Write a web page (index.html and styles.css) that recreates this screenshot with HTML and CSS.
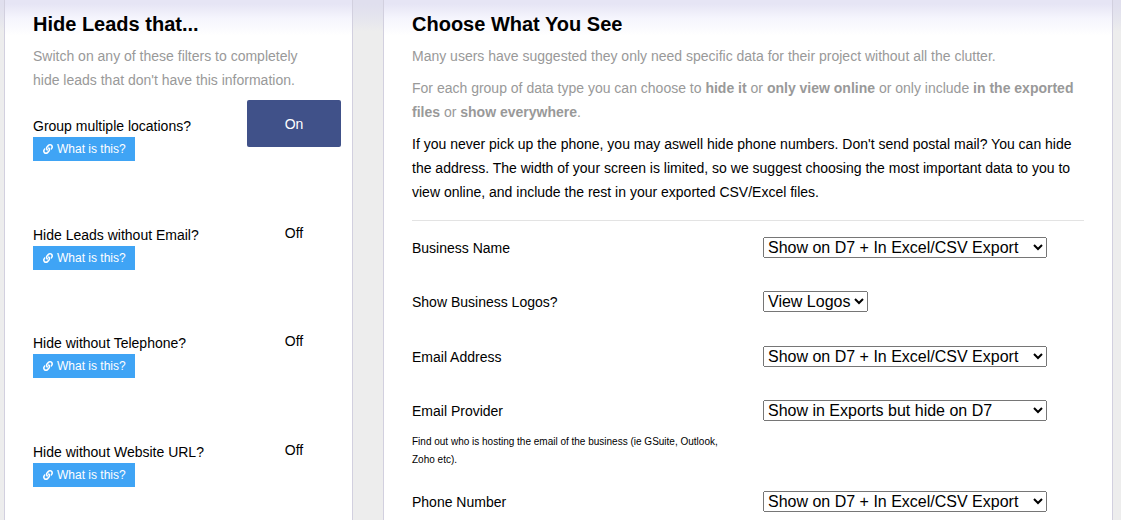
FILE: index.html
```
<!DOCTYPE html>
<html lang="en">
  <head>
    <meta charset="UTF-8" />
    <meta name="viewport" content="width=device-width, initial-scale=1.0" />
    <title>Lead Settings</title>
    <link rel="stylesheet" href="styles.css">
  </head>
  <body>
    <svg class="sprite" aria-hidden="true">
      <symbol id="icon-link" viewBox="0 0 512 512">
        <path fill="currentColor" d="M326.612 185.391c59.747 59.809 58.927 155.698.36 214.59-.11.12-.24.25-.36.37l-67.2 67.2c-59.27 59.27-155.699 59.262-214.96 0-59.27-59.26-59.27-155.7 0-214.96l37.106-37.106c9.84-9.84 26.786-3.3 27.294 10.606.648 17.722 3.826 35.527 9.69 52.721 1.986 5.822.567 12.262-3.783 16.612l-13.087 13.087c-28.026 28.026-28.905 73.66-1.155 101.96 28.024 28.579 74.086 28.749 102.325.51l67.2-67.19c28.191-28.191 28.073-73.757 0-101.83-3.701-3.694-7.429-6.564-10.341-8.569a16.037 16.037 0 0 1-6.947-12.606c-.396-10.567 3.348-21.456 11.698-29.806l21.054-21.055c5.521-5.521 14.182-6.199 20.584-1.731a152.482 152.482 0 0 1 20.522 17.197zM467.547 44.449c-59.261-59.262-155.69-59.27-214.96 0l-67.2 67.2c-.12.12-.25.25-.36.37-58.566 58.892-59.387 154.781.36 214.59a152.454 152.454 0 0 0 20.521 17.196c6.402 4.468 15.064 3.789 20.584-1.731l21.054-21.055c8.35-8.35 12.094-19.239 11.698-29.806a16.037 16.037 0 0 0-6.947-12.606c-2.912-2.005-6.64-4.875-10.341-8.569-28.073-28.073-28.191-73.639 0-101.83l67.2-67.19c28.239-28.239 74.3-28.069 102.325.51 27.75 28.3 26.872 73.934-1.155 101.96l-13.087 13.087c-4.35 4.35-5.769 10.79-3.783 16.612 5.864 17.194 9.042 34.999 9.69 52.721.509 13.906 17.454 20.446 27.294 10.606l37.106-37.106c59.271-59.259 59.271-155.699.001-214.959z"/>
      </symbol>
    </svg>

    <main class="settings">
      <section class="panel">
        <h2>Hide Leads that...</h2>
        <p class="muted">Switch on any of these filters to completely hide leads that don't have this information.</p>

        <div class="filters">
          <div class="filter">
            <div class="filter-text">
              <span id="filter-group">Group multiple locations?</span>
              <a class="help" href="#"><svg><use href="#icon-link" /></svg>What is this?</a>
            </div>
            <button class="toggle on" type="button" aria-pressed="true" aria-labelledby="filter-group">On</button>
          </div>
          <div class="filter">
            <div class="filter-text">
              <span id="filter-email">Hide Leads without Email?</span>
              <a class="help" href="#"><svg><use href="#icon-link" /></svg>What is this?</a>
            </div>
            <button class="toggle" type="button" aria-pressed="false" aria-labelledby="filter-email">Off</button>
          </div>
          <div class="filter">
            <div class="filter-text">
              <span id="filter-phone">Hide without Telephone?</span>
              <a class="help" href="#"><svg><use href="#icon-link" /></svg>What is this?</a>
            </div>
            <button class="toggle" type="button" aria-pressed="false" aria-labelledby="filter-phone">Off</button>
          </div>
          <div class="filter">
            <div class="filter-text">
              <span id="filter-url">Hide without Website URL?</span>
              <a class="help" href="#"><svg><use href="#icon-link" /></svg>What is this?</a>
            </div>
            <button class="toggle" type="button" aria-pressed="false" aria-labelledby="filter-url">Off</button>
          </div>
        </div>
      </section>

      <section class="panel">
        <h2>Choose What You See</h2>
        <p class="muted">Many users have suggested they only need specific data for their project without all the clutter.</p>
        <p class="muted">For each group of data type you can choose to <b>hide it</b> or <b>only view online</b> or only include <b>in the exported files</b> or <b>show everywhere</b>.</p>
        <p>If you never pick up the phone, you may aswell hide phone numbers. Don't send postal mail? You can hide the address. The width of your screen is limited, so we suggest choosing the most important data to you to view online, and include the rest in your exported CSV/Excel files.</p>
        <hr>

        <div class="fields">
          <div class="field">
            <label for="name">Business Name</label>
            <select id="name" class="wide">
              <option>Show on D7 + In Excel/CSV Export</option>
              <option>Show in Exports but hide on D7</option>
            </select>
          </div>
          <div class="field">
            <label for="logos">Show Business Logos?</label>
            <select id="logos">
              <option>View Logos</option>
              <option>Hide Logos</option>
            </select>
          </div>
          <div class="field">
            <label for="email">Email Address</label>
            <select id="email" class="wide">
              <option>Show on D7 + In Excel/CSV Export</option>
              <option>Show in Exports but hide on D7</option>
            </select>
          </div>
          <div class="field">
            <div>
              <label for="provider">Email Provider</label>
              <small>Find out who is hosting the email of the business (ie GSuite, Outlook, Zoho etc).</small>
            </div>
            <select id="provider" class="wide">
              <option>Show on D7 + In Excel/CSV Export</option>
              <option selected>Show in Exports but hide on D7</option>
            </select>
          </div>
          <div class="field">
            <label for="phone">Phone Number</label>
            <select id="phone" class="wide">
              <option>Show on D7 + In Excel/CSV Export</option>
              <option>Show in Exports but hide on D7</option>
            </select>
          </div>
        </div>
      </section>
    </main>
  </body>
</html>
```

FILE: styles.css
```
:root {
  --page-clr: #ededed;
  --line-clr: #d2d0df;
  --muted-clr: #999;
  --help-clr: #3fa4f5;
  --on-clr: #405189;
}
* {
  box-sizing: border-box;
}
body {
  margin: 0;
  background: var(--page-clr) linear-gradient(#e0dfee 4px, #e4e4ee 16px, var(--page-clr) 32px) no-repeat;
  font-family: "Liberation Sans", Arial, sans-serif;
  font-size: 14px;
  line-height: 24px;
  color: #000;
}
.sprite {
  display: none;
}
.settings {
  display: grid;
  grid-template-columns: 349fr 730fr;
  gap: 30px;
  min-height: 100vh;
  padding: 0 8px 0 4px;
}
.panel {
  padding: 12px 28px 0;
  background: linear-gradient(#e6e5f5 4px, #f5f5fd 18px, #fff 36px);
  border: solid var(--line-clr);
  border-width: 0 1px;
}
h2 {
  margin: 0 0 8px;
  font-size: 20px;
  line-height: 24px;
}
p {
  margin: 0 0 8px;
}
.muted {
  color: var(--muted-clr);
}
hr {
  margin: 16px 0;
  border: 0;
  border-top: 1px solid #e3e3e3;
}

.filters {
  display: grid;
  grid-auto-rows: 109px 108px;
  /* toggles hang over the panel padding */
  margin-right: -17px;
}
.filter {
  display: flex;
  justify-content: space-between;
  align-items: flex-start;
}
.filter-text {
  display: flex;
  flex-direction: column;
  align-items: flex-start;
  padding-top: 15px;
}
.filter-text span {
  line-height: 22px;
}
.help {
  display: flex;
  align-items: center;
  gap: 4px;
  padding: 0 9px 0 10px;
  background-color: var(--help-clr);
  color: white;
  font-size: 12px;
  text-decoration: none;

  svg {
    width: 10px;
    height: 10px;
  }
}
.toggle {
  width: 94px;
  height: 47px;
  border: 0;
  border-radius: 2px;
  background: none;
  color: #000;
  font: inherit;

  &.on {
    background-color: var(--on-clr);
    color: white;
  }
}

.fields {
  display: grid;
  grid-auto-rows: minmax(54px, auto) minmax(55px, auto);
}
.field {
  display: grid;
  grid-template-columns: 1fr 1fr;
  gap: 30px;
  align-items: start;

  label {
    display: block;
    line-height: 22px;
  }
  small {
    display: block;
    margin: 11px 0 22px;
    font-size: 10px;
    line-height: 18px;
  }
  select {
    justify-self: start;
    font-family: inherit;
    font-size: 16px;
  }
  .wide {
    width: 284px;
  }
}
```
